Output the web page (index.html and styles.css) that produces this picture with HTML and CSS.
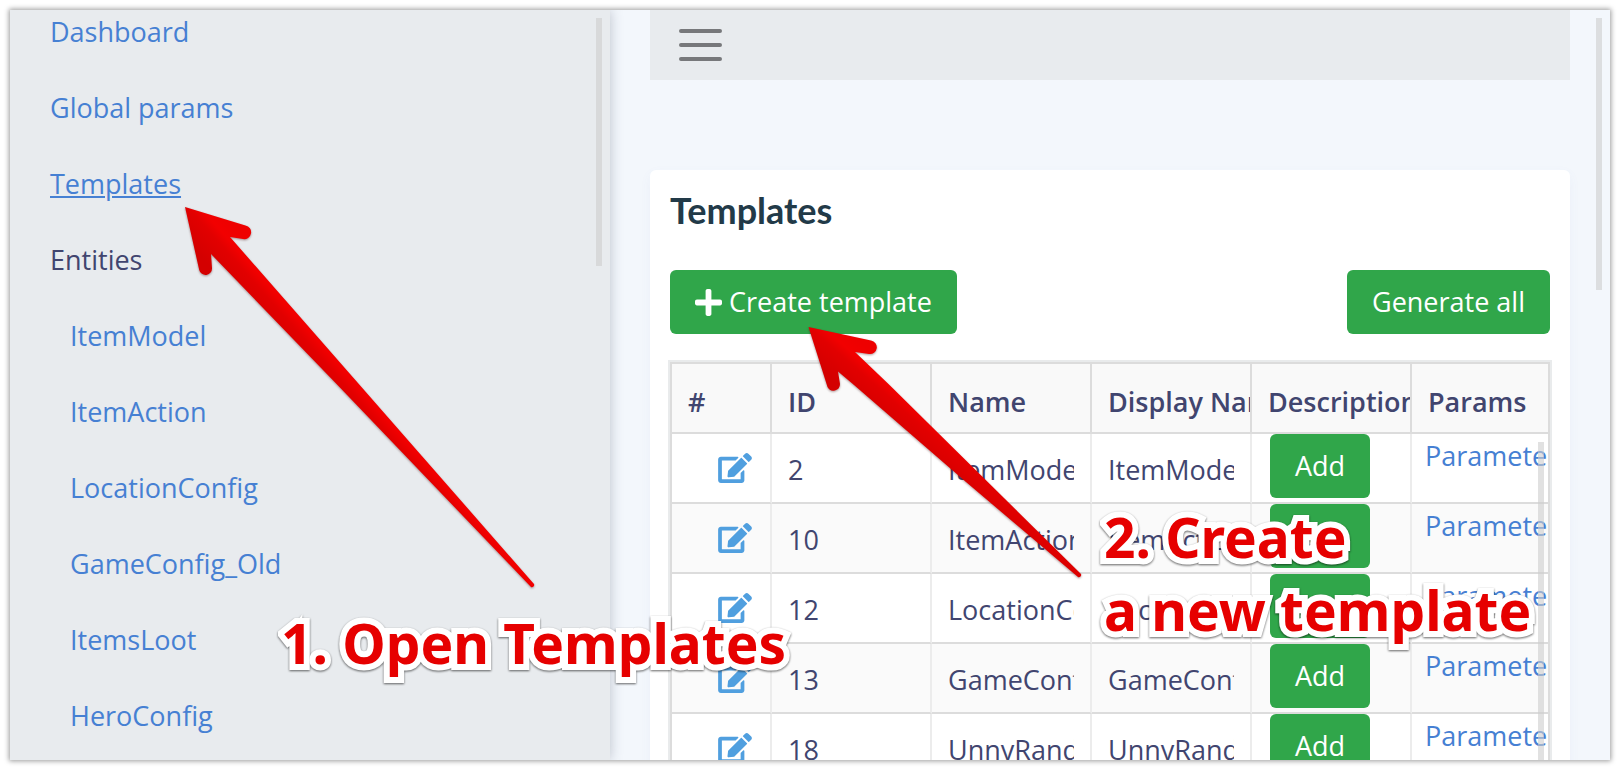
FILE: index.html
```html
<!DOCTYPE html>
<html lang="en">
<head>
<meta charset="utf-8">
<title>Templates</title>
<link rel="stylesheet" href="styles.css">
</head>
<body>
<svg class="symbols" aria-hidden="true">
  <symbol id="edit" viewBox="0 0 576 512"><path d="M402.6 83.2l90.2 90.2c3.8 3.8 3.8 10 0 13.8L274.4 405.6l-92.8 10.3c-12.4 1.4-22.9-9.1-21.5-21.5l10.3-92.8L388.8 83.2c3.8-3.8 10-3.8 13.8 0zm162-22.9l-48.8-48.8c-15.2-15.2-39.9-15.2-55.2 0l-35.4 35.4c-3.8 3.8-3.8 10 0 13.8l90.2 90.2c3.8 3.8 10 3.8 13.8 0l35.4-35.4c15.2-15.3 15.2-40 0-55.2zM384 346.2V448H64V128h229.8c3.2 0 6.2-1.3 8.5-3.5l40-40c7.6-7.6 2.2-20.5-8.5-20.5H48C21.5 64 0 85.5 0 112v352c0 26.5 21.5 48 48 48h352c26.5 0 48-21.5 48-48V306.2c0-10.7-12.9-16-20.5-8.5l-40 40c-2.2 2.3-3.5 5.3-3.5 8.5z"/></symbol>
</svg>
<div class="app">
  <aside class="sidebar">
    <nav class="menu">
      <a href="#">Dashboard</a>
      <a href="#">Global params</a>
      <a href="#" class="active">Templates</a>
      <span>Entities</span>
      <div class="submenu">
        <a href="#">ItemModel</a>
        <a href="#">ItemAction</a>
        <a href="#">LocationConfig</a>
        <a href="#">GameConfig_Old</a>
        <a href="#">ItemsLoot</a>
        <a href="#">HeroConfig</a>
      </div>
    </nav>
    <div class="scroll scroll-menu"></div>
  </aside>
  <main class="main">
    <header class="topbar">
      <button class="burger" type="button" aria-label="Menu">
        <svg width="44" height="34" viewBox="0 0 44 34"><path d="M2 3H41M2 17H41M2 31H41" stroke="#77787b" stroke-width="4" stroke-linecap="round"/></svg>
      </button>
    </header>
    <section class="card">
      <h1>Templates</h1>
      <div class="actions">
        <button class="btn" type="button"><svg width="27" height="27" viewBox="0 32 448 448"><path fill="#fff" d="M416 208H272V64c0-17.67-14.33-32-32-32h-32c-17.67 0-32 14.33-32 32v144H32c-17.67 0-32 14.33-32 32v32c0 17.67 14.33 32 32 32h144v144c0 17.67 14.33 32 32 32h32c17.67 0 32-14.33 32-32V304h144c17.67 0 32-14.33 32-32v-32c0-17.67-14.33-32-32-32z"/></svg>Create template</button>
        <button class="btn" type="button">Generate all</button>
      </div>
      <div class="grid">
        <table>
          <colgroup><col class="col-icon"><col><col><col><col><col></colgroup>
          <thead>
            <tr><th>#</th><th>ID</th><th>Name</th><th>Display Name</th><th>Description</th><th>Params</th></tr>
          </thead>
          <tbody>
            <tr><td class="edit"><a href="#" aria-label="Edit"><svg><use href="#edit"/></svg></a></td><td>2</td><td><div>ItemModel</div></td><td><div>ItemModel</div></td><td class="add"><button class="btn" type="button">Add</button></td><td class="params"><a href="#">Parameters</a></td></tr>
            <tr><td class="edit"><a href="#" aria-label="Edit"><svg><use href="#edit"/></svg></a></td><td>10</td><td><div>ItemAction</div></td><td><div>ItemAction</div></td><td class="add"><button class="btn" type="button">Add</button></td><td class="params"><a href="#">Parameters</a></td></tr>
            <tr><td class="edit"><a href="#" aria-label="Edit"><svg><use href="#edit"/></svg></a></td><td>12</td><td><div>LocationConfig</div></td><td><div>LocationConfig</div></td><td class="add"><button class="btn" type="button">Add</button></td><td class="params"><a href="#">Parameters</a></td></tr>
            <tr><td class="edit"><a href="#" aria-label="Edit"><svg><use href="#edit"/></svg></a></td><td>13</td><td><div>GameConfig</div></td><td><div>GameConfig</div></td><td class="add"><button class="btn" type="button">Add</button></td><td class="params"><a href="#">Parameters</a></td></tr>
            <tr><td class="edit"><a href="#" aria-label="Edit"><svg><use href="#edit"/></svg></a></td><td>18</td><td><div>UnnyRandom</div></td><td><div>UnnyRandom</div></td><td class="add"><button class="btn" type="button">Add</button></td><td class="params"><a href="#">Parameters</a></td></tr>
          </tbody>
        </table>
        <div class="scroll scroll-grid"></div>
      </div>
    </section>
    <div class="scroll scroll-page"></div>
  </main>
</div>
<svg class="arrows" width="1620" height="770" viewBox="0 0 1620 770" aria-hidden="true">
  <defs>
    <linearGradient id="red1" gradientUnits="userSpaceOnUse" x1="206" y1="262" x2="240" y2="232">
      <stop offset="0" stop-color="#d40000"/><stop offset=".5" stop-color="#e20000"/><stop offset=".7" stop-color="#f20000"/><stop offset="1" stop-color="#ee0000"/>
    </linearGradient>
    <linearGradient id="red2" gradientUnits="userSpaceOnUse" x1="835" y1="380" x2="865" y2="346">
      <stop offset="0" stop-color="#d40000"/><stop offset=".5" stop-color="#e20000"/><stop offset=".7" stop-color="#f20000"/><stop offset="1" stop-color="#ee0000"/>
    </linearGradient>
  </defs>
  <path fill="url(#red1)" d="M185 207L245.500 225.500A6.700 6.700 0 0 1 243 239L230 237L534 584A2.300 2.300 0 0 1 531 587L337.500 385L211 254L212 268A6.500 6.500 0 0 1 199.200 270Z"/>
  <path fill="url(#red2)" d="M808.500 327L871 340.500A6.700 6.700 0 0 1 869 354L855 352L889.500 385L1081 574A2.300 2.300 0 0 1 1078 577L966 482L854 385L838 371.500L840 384A6.600 6.600 0 0 1 827.500 387Z"/>
</svg>
<p class="note note-open">1. Open Templates</p>
<p class="note note-create">2. Create<br>a new template</p>
</body>
</html>
```
FILE: styles.css
```css
* { box-sizing: border-box; }

body {
  margin: 0;
  padding: 10px;
  height: 100vh;
  overflow: hidden;
  background: #fff;
  color: #41456f;
  font: 450 27px/40px "Open Sans", "Noto Sans", sans-serif;
}

a { color: #4680d3; text-decoration: none; }

button { font: inherit; border: 0; cursor: pointer; }

.symbols { position: absolute; width: 0; height: 0; }

.app {
  display: flex;
  height: 100%;
  overflow: hidden;
  background: #f3f7fc;
  box-shadow: 0 0 5px 1px rgba(0, 0, 0, .4);
}

.sidebar {
  position: relative;
  z-index: 1;
  flex: 0 0 600px;
  overflow: hidden;
  background: #e8ebee;
  box-shadow: 0 0 12px rgba(60, 70, 90, .3);
}

.menu {
  display: flex;
  flex-direction: column;
  align-items: flex-start;
  margin-top: -16px;
  padding-left: 40px;
  line-height: 76px;
}

.submenu { display: flex; flex-direction: column; padding-left: 20px; }

.active {
  text-decoration: underline;
  text-decoration-thickness: 2px;
  text-underline-offset: 2px;
}

.scroll { position: absolute; width: 6px; background: rgba(205, 205, 205, .6); }
.scroll-menu { top: 8px; right: 8px; height: 248px; }
.scroll-page { top: 8px; right: 8px; height: 272px; }
.scroll-grid { top: 78px; right: 4px; bottom: 0; }

.main { position: relative; flex: 1; min-width: 0; padding: 0 40px; }

.topbar {
  display: flex;
  align-items: center;
  height: 70px;
  padding: 0 29px;
  background: #e8ebee;
}

.burger { padding: 0; background: none; }
.burger svg { display: block; fill: none; }

.card {
  margin-top: 90px;
  padding: 18px 20px 20px;
  border-radius: 6px;
  background: #fff;
  box-shadow: 0 4px 12px rgba(90, 110, 200, .05);
}

h1 {
  margin: 0 0 38px;
  color: #223a48;
  font: 700 36px/44px Lato, sans-serif;
}

.actions { display: flex; justify-content: space-between; margin-bottom: 28px; }

.btn {
  display: inline-flex;
  align-items: center;
  gap: 7px;
  height: 64px;
  padding: 0 25px;
  border-radius: 6px;
  background: #30a64a;
  color: #fff;
}

.grid {
  position: relative;
  overflow: hidden;
  border: 2px solid #dcdcdc;
  box-shadow: 0 0 0 2px #e9ebec;
}

table {
  width: 900px;
  table-layout: fixed;
  border-collapse: separate;
  border-spacing: 0;
}

.col-icon { width: 100px; }

th, td {
  height: 70px;
  padding: 0 16px;
  overflow: hidden;
  border-right: 2px solid #ececec;
  border-bottom: 2px solid #dcdcdc;
  text-align: left;
  white-space: nowrap;
}

th {
  padding: 8px 0 0 16px;
  border-right-color: #dcdcdc;
  background: #f9f9f9;
  font-weight: 650;
}

td { padding-top: 4px; }
td div { overflow: hidden; }
tbody tr:nth-child(even) { background: #fafafa; }

.edit { padding: 0 18px 0 0; text-align: right; line-height: 30px; }
.edit svg { display: block; width: 34px; height: 30px; margin-left: auto; fill: #509fdf; }

.add { padding: 0 18px; vertical-align: top; }
.add .btn { display: block; }

.params { padding: 1px 0 0 13px; line-height: 42px; vertical-align: top; }

.arrows { position: absolute; top: 0; left: 0; z-index: 2; filter: drop-shadow(0 1px 1px rgba(60, 0, 0, .4)); }

.note {
  position: absolute;
  z-index: 3;
  margin: 0;
  color: #e60000;
  font: 700 55px/73px "Noto Sans", "Open Sans", sans-serif;
  white-space: nowrap;
  -webkit-text-stroke: 12px #fff;
  paint-order: stroke fill;
  filter: drop-shadow(0 1px 1px rgba(0, 0, 0, .6));
}

.note-open { top: 606px; left: 281px; }
.note-create { top: 500px; left: 1104px; }
```
